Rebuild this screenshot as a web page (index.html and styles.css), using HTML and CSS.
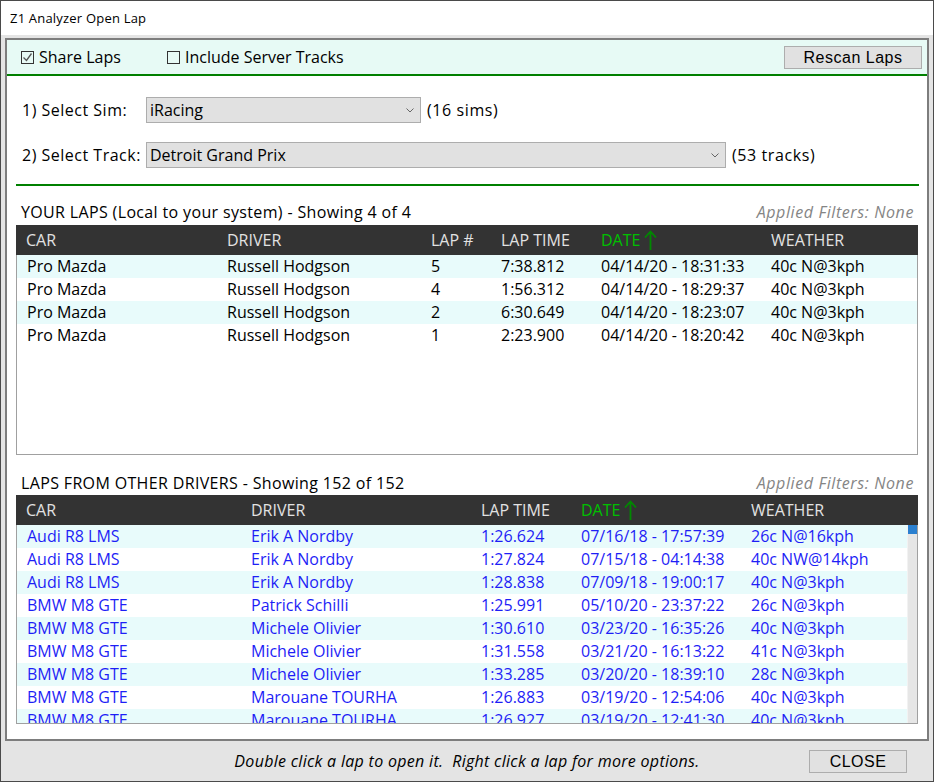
FILE: index.html
```html
<!DOCTYPE html>
<html>
<head>
<meta charset="utf-8">
<title>Z1 Analyzer Open Lap</title>
<link rel="stylesheet" href="styles.css">
</head>
<body>
<div class="window">
  <div class="titlebar">Z1 Analyzer Open Lap</div>
  <div class="client">
    <div class="panel">
      <div class="toolbar">
        <label class="check first"><span class="box"><svg width="11" height="11" viewBox="0 0 11 11"><polyline points="1.5,5.5 4.5,8.5 9.5,1.5" fill="none" stroke="#555" stroke-width="1.3"/></svg></span>Share Laps</label>
        <label class="check"><span class="box"></span>Include Server Tracks</label>
        <button class="btn rescan">Rescan Laps</button>
      </div>
      <div class="selectors">
        <div class="sel-row">
          <span class="sel-label">1) Select Sim:</span>
          <div class="combo combo-sim"><span>iRacing</span><svg class="chev" width="8" height="5" viewBox="0 0 8 5"><polyline points="0.5,0.5 4,4 7.5,0.5" fill="none" stroke="#666" stroke-width="1"/></svg></div>
          <span class="count">(16 sims)</span>
        </div>
        <div class="sel-row">
          <span class="sel-label">2) Select Track:</span>
          <div class="combo combo-track"><span>Detroit Grand Prix</span><svg class="chev" width="8" height="5" viewBox="0 0 8 5"><polyline points="0.5,0.5 4,4 7.5,0.5" fill="none" stroke="#666" stroke-width="1"/></svg></div>
          <span class="count">(53 tracks)</span>
        </div>
      </div>
      <div class="divider"></div>

      <div class="section-title first-title">
        <span>YOUR LAPS (Local to your system) - Showing 4 of 4</span>
        <span class="filters">Applied Filters: None</span>
      </div>
      <div class="table table-local">
        <div class="thead cols-local">
          <span>CAR</span><span>DRIVER</span><span>LAP #</span><span>LAP TIME</span>
          <span class="sorted">DATE<svg width="13" height="20" viewBox="0 0 13 20"><path d="M6.5 1.5 V20 M1 7.5 L6.5 1.5 L12 7.5" fill="none" stroke="#008a00" stroke-width="1.8"/></svg></span>
          <span>WEATHER</span>
        </div>
        <div class="tbody local-body">
          <div class="row cols-local"><span>Pro Mazda</span><span>Russell Hodgson</span><span>5</span><span>7:38.812</span><span>04/14/20 - 18:31:33</span><span>40c N@3kph</span></div>
          <div class="row cols-local"><span>Pro Mazda</span><span>Russell Hodgson</span><span>4</span><span>1:56.312</span><span>04/14/20 - 18:29:37</span><span>40c N@3kph</span></div>
          <div class="row cols-local"><span>Pro Mazda</span><span>Russell Hodgson</span><span>2</span><span>6:30.649</span><span>04/14/20 - 18:23:07</span><span>40c N@3kph</span></div>
          <div class="row cols-local"><span>Pro Mazda</span><span>Russell Hodgson</span><span>1</span><span>2:23.900</span><span>04/14/20 - 18:20:42</span><span>40c N@3kph</span></div>
        </div>
      </div>

      <div class="section-title second-title">
        <span>LAPS FROM OTHER DRIVERS - Showing 152 of 152</span>
        <span class="filters">Applied Filters: None</span>
      </div>
      <div class="table table-other">
        <div class="thead cols-other">
          <span>CAR</span><span>DRIVER</span><span>LAP TIME</span>
          <span class="sorted">DATE<svg width="13" height="20" viewBox="0 0 13 20"><path d="M6.5 1.5 V20 M1 7.5 L6.5 1.5 L12 7.5" fill="none" stroke="#008a00" stroke-width="1.8"/></svg></span>
          <span>WEATHER</span>
        </div>
        <div class="other-body">
          <div class="tbody rows-other">
            <div class="row cols-other blue"><span>Audi R8 LMS</span><span>Erik A Nordby</span><span>1:26.624</span><span>07/16/18 - 17:57:39</span><span>26c N@16kph</span></div>
            <div class="row cols-other blue"><span>Audi R8 LMS</span><span>Erik A Nordby</span><span>1:27.824</span><span>07/15/18 - 04:14:38</span><span>40c NW@14kph</span></div>
            <div class="row cols-other blue"><span>Audi R8 LMS</span><span>Erik A Nordby</span><span>1:28.838</span><span>07/09/18 - 19:00:17</span><span>40c N@3kph</span></div>
            <div class="row cols-other blue"><span>BMW M8 GTE</span><span>Patrick Schilli</span><span>1:25.991</span><span>05/10/20 - 23:37:22</span><span>26c N@3kph</span></div>
            <div class="row cols-other blue"><span>BMW M8 GTE</span><span>Michele Olivier</span><span>1:30.610</span><span>03/23/20 - 16:35:26</span><span>40c N@3kph</span></div>
            <div class="row cols-other blue"><span>BMW M8 GTE</span><span>Michele Olivier</span><span>1:31.558</span><span>03/21/20 - 16:13:22</span><span>41c N@3kph</span></div>
            <div class="row cols-other blue"><span>BMW M8 GTE</span><span>Michele Olivier</span><span>1:33.285</span><span>03/20/20 - 18:39:10</span><span>28c N@3kph</span></div>
            <div class="row cols-other blue"><span>BMW M8 GTE</span><span>Marouane TOURHA</span><span>1:26.883</span><span>03/19/20 - 12:54:06</span><span>40c N@3kph</span></div>
            <div class="row cols-other blue"><span>BMW M8 GTE</span><span>Marouane TOURHA</span><span>1:26.927</span><span>03/19/20 - 12:41:30</span><span>40c N@3kph</span></div>
          </div>
          <div class="scrollbar"><div class="thumb"></div></div>
        </div>
      </div>
    </div>
    <div class="footer">
      <span></span>
      <span class="hint">Double click a lap to open it.&nbsp; Right click a lap for more options.</span>
      <button class="btn close">CLOSE</button>
    </div>
  </div>
</div>
</body>
</html>
```

FILE: styles.css
```css
* { box-sizing: border-box; }
html, body { margin: 0; padding: 0; }
body {
  font-family: "Open Sans", "Noto Sans", sans-serif;
  color: #000;
  background: #e4e4e4;
}
.window {
  width: 934px;
  height: 782px;
  border: 1px solid #4a4a4a;
  background: #e4e4e4;
  display: flex;
  flex-direction: column;
  overflow: hidden;
}
.titlebar {
  height: 34px;
  flex: none;
  background: #fff;
  padding-left: 9px;
  font-size: 13px;
  line-height: 34px;
  letter-spacing: 0.2px;
}
.client {
  flex: 1;
  display: flex;
  flex-direction: column;
  padding: 3px 4px 0 4px;
}
.panel {
  height: 703px;
  flex: none;
  border: 2px solid #7d7d7d;
  background: #fff;
  display: flex;
  flex-direction: column;
}
.toolbar {
  height: 36px;
  flex: none;
  background: #e7faf5;
  border-bottom: 2px solid #008000;
  display: flex;
  align-items: center;
  padding: 0 5px 0 14px;
}
.check {
  display: flex;
  align-items: center;
  font-size: 16px;
  white-space: nowrap;
}
.check.first { width: 146px; }
.box {
  width: 13px;
  height: 13px;
  border: 1px solid #333;
  margin-right: 5px;
  display: flex;
  align-items: center;
  justify-content: center;
}
.btn {
  font-family: "Liberation Sans", Arial, sans-serif;
  font-size: 16px;
  background: #e1e1e1;
  border: 1px solid #adadad;
  color: #000;
  padding: 0;
  height: 23px;
  line-height: 21px;
}
.rescan {
  margin-left: auto;
  width: 138px;
  letter-spacing: 0.5px;
}
.selectors {
  padding: 21px 0 16px 15px;
  display: flex;
  flex-direction: column;
  gap: 19px;
}
.sel-row {
  display: flex;
  align-items: center;
  height: 26px;
  font-size: 16px;
}
.sel-label {
  width: 124px;
  letter-spacing: 0.5px;
  white-space: nowrap;
}
.combo {
  height: 26px;
  background: #e1e1e1;
  border: 1px solid #adadad;
  display: flex;
  align-items: center;
  padding: 0 6px 0 3px;
}
.combo span { flex: 1; }
.combo-sim { width: 275px; }
.combo-track { width: 580px; }
.chev { flex: none; }
.count { margin-left: 6px; letter-spacing: 0.6px; }
.divider {
  height: 2px;
  background: #008000;
  margin: 0 8px 0 9px;
  flex: none;
}
.section-title {
  height: 25px;
  padding: 0 13px 2px 14px;
  display: flex;
  justify-content: space-between;
  align-items: center;
  font-size: 16px;
  letter-spacing: 0.35px;
  white-space: nowrap;
  flex: none;
}
.first-title { margin-top: 14px; }
.second-title { margin-top: 17px; height: 23px; padding-bottom: 1px; }
.filters {
  font-style: italic;
  color: #858585;
  letter-spacing: 0.6px;
}
.table {
  margin: 0 9px 0 9px;
  border: 1px solid #a0a0a0;
  border-top: 0;
  flex: none;
}
.thead {
  height: 30px;
  margin: 0 -1px;
  background: #333;
  color: #e2e2e2;
  font-size: 16px;
  display: grid;
  align-items: center;
}
.thead > span { padding-left: 10px; white-space: nowrap; }
.thead .sorted {
  color: #00c000;
  display: flex;
  align-items: center;
  gap: 4px;
}
.cols-local { grid-template-columns: 200px 204px 70px 100px 170px 1fr; }
.thead.cols-local { grid-template-columns: 201px 204px 70px 100px 170px 1fr; }
.cols-other { grid-template-columns: 224px 230px 100px 170px 1fr; }
.thead.cols-other { grid-template-columns: 225px 230px 100px 170px 1fr; }
.local-body { height: 199px; }
.row {
  height: 23px;
  display: grid;
  align-items: center;
  font-size: 16px;
  line-height: 23px;
}
.row > span { padding-left: 10px; white-space: nowrap; overflow: hidden; }
.row:nth-child(odd) { background: #e8fbfb; }
.row.blue { color: #1e1ef6; }
.other-body {
  height: 198px;
  display: flex;
  overflow: hidden;
}
.rows-other { flex: 1; overflow: hidden; }
.scrollbar {
  width: 10px;
  flex: none;
  background: #e6e6e6;
  border-left: 1px solid #f2f2f2;
}
.thumb {
  height: 9px;
  background: #2b80d0;
}
.footer {
  height: 40px;
  display: grid;
  grid-template-columns: 1fr auto 1fr;
  align-items: center;
}
.hint {
  font-style: italic;
  font-size: 16px;
  letter-spacing: 0.3px;
  white-space: nowrap;
}
.close {
  justify-self: end;
  margin-right: 22px;
  width: 98px;
  letter-spacing: 0.5px;
}
```
